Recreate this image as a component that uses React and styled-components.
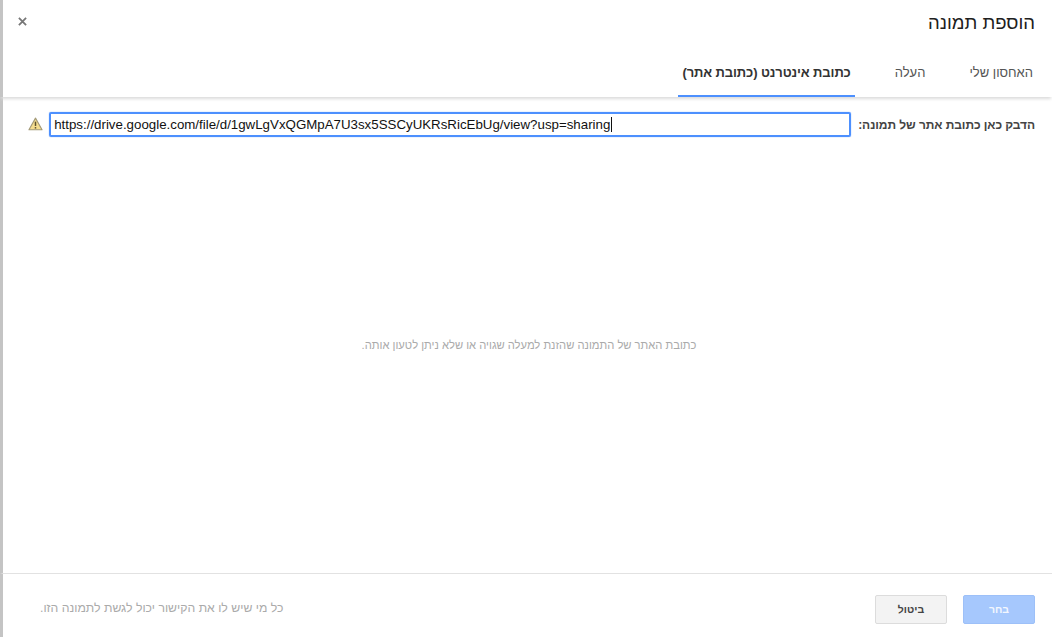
import React from "react"
import styled, { createGlobalStyle } from "styled-components"

const GlobalStyle = createGlobalStyle`
  html, body {
    margin: 0;
    padding: 0;
    height: 100%;
    background: #fff;
    overflow: hidden;
  }
  * { box-sizing: border-box; }
`

const App = () => {
  return (
    <Dialog dir="rtl">
      <GlobalStyle />
      <Header>
        <Title>הוספת תמונה</Title>
        <CloseIcon viewBox="0 0 10 10">
          <path d="M1 1L9 9M9 1L1 9" stroke="#777" strokeWidth="2" fill="none" />
        </CloseIcon>
      </Header>
      <Tabs>
        <Tab>האחסון שלי</Tab>
        <Tab $beforeActive>העלה</Tab>
        <Tab $active>כתובת אינטרנט (כתובת אתר)</Tab>
      </Tabs>
      <Body>
        <UrlRow>
          <UrlLabel>הדבק כאן כתובת אתר של תמונה:</UrlLabel>
          <UrlInput dir="ltr">
            https://drive.google.com/file/d/1gwLgVxQGMpA7U3sx5SSCyUKRsRicEbUg/view?usp=sharing
            <Caret />
          </UrlInput>
          <WarningIcon viewBox="0 0 16 15">
            <path d="M8 1.2L15 13.6H1Z" fill="#f5dd8e" stroke="#a39a78" strokeWidth="1.2" strokeLinejoin="round" />
            <path d="M8 5V9.6" stroke="#5b5130" strokeWidth="1.6" />
            <path d="M8 10.8V12.4" stroke="#5b5130" strokeWidth="1.6" />
          </WarningIcon>
        </UrlRow>
        <Message>כתובת האתר של התמונה שהזנת למעלה שגויה או שלא ניתן לטעון אותה.</Message>
      </Body>
      <Footer>
        <Button $primary>בחר</Button>
        <Button>ביטול</Button>
        <Note>כל מי שיש לו את הקישור יכול לגשת לתמונה הזו.</Note>
      </Footer>
    </Dialog>
  )
}

export default App

const Dialog = styled.div`
  width: 1052px;
  height: 637px;
  display: flex;
  flex-direction: column;
  background: #fff;
  font-family: "Liberation Sans", Arial, sans-serif;
`

const Header = styled.div`
  height: 52px;
  flex-shrink: 0;
  display: flex;
  align-items: flex-start;
  justify-content: space-between;
  padding: 12px 17px 0 15px;
  border-left: 3px solid #c4c4c4;
`

const Title = styled.div`
  font-size: 18.5px;
  line-height: 21px;
  color: #202020;
`

const CloseIcon = styled.svg`
  width: 9px;
  height: 9px;
  margin-top: 5px;
`

const Tabs = styled.div`
  height: 45px;
  flex-shrink: 0;
  display: flex;
  padding-right: 7px;
  border-left: 3px solid #c4c4c4;
  box-shadow: 0 3px 3px -1px #dcdcdc;
  position: relative;
`

const Tab = styled.div`
  padding: 0 ${(p) => (p.$active ? "4px" : "12px")};
  margin-left: ${(p) => (p.$active ? "0" : p.$beforeActive ? "28px" : "20px")};
  height: 45px;
  line-height: 41px;
  font-size: 13px;
  letter-spacing: ${(p) => (p.$active ? "-0.1px" : "0")};
  font-weight: ${(p) => (p.$active ? "bold" : "normal")};
  color: ${(p) => (p.$active ? "#333" : "#555")};
  border-bottom: 2px solid ${(p) => (p.$active ? "#4d90fe" : "transparent")};
`

const Body = styled.div`
  flex: 1;
  display: flex;
  flex-direction: column;
  border-left: 3px solid #c4c4c4;
`

const UrlRow = styled.div`
  display: flex;
  align-items: center;
  padding: 15px 17px 0 0;
`

const UrlLabel = styled.div`
  font-size: 12px;
  font-weight: bold;
  letter-spacing: -0.07px;
  color: #444;
  white-space: nowrap;
  margin-left: 7px;
`

const UrlInput = styled.div`
  width: 802px;
  height: 25px;
  border: 2px solid #4d90fe;
  border-radius: 2px;
  box-shadow: 0 0 1px #4d90fe;
  font-size: 13.3px;
  line-height: 21px;
  padding-left: 3px;
  color: #111;
  white-space: nowrap;
  text-align: left;
  display: flex;
  align-items: center;
`

const Caret = styled.span`
  display: inline-block;
  width: 1px;
  height: 15px;
  margin-left: 1px;
  background: #111;
`

const WarningIcon = styled.svg`
  width: 15px;
  height: 14px;
  margin-right: 6px;
  margin-top: -1px;
`

const Message = styled.div`
  flex: 1;
  display: flex;
  align-items: center;
  justify-content: center;
  font-size: 11.2px;
  color: #aaa;
  padding: 0 0 21px 3px;
`

const Footer = styled.div`
  height: 64px;
  flex-shrink: 0;
  display: flex;
  align-items: flex-start;
  padding: 21px 17px 0 37px;
  border-top: 1px solid #e2e2e2;
  border-left: 3px solid #c4c4c4;
`

const Button = styled.div`
  width: 72px;
  height: 29px;
  margin-left: 16px;
  border-radius: 2px;
  border: 1px solid ${(p) => (p.$primary ? "#9dc0f8" : "#dcdcdc")};
  background: ${(p) => (p.$primary ? "#a6c8fd" : "#f3f3f3")};
  color: ${(p) => (p.$primary ? "#f3f7fe" : "#444")};
  font-size: 10.5px;
  font-weight: bold;
  line-height: 27px;
  text-align: center;
`

const Note = styled.div`
  flex: 1;
  font-size: 12.25px;
  line-height: 27px;
  color: #aaa;
  display: flex;
  justify-content: flex-end;
`
